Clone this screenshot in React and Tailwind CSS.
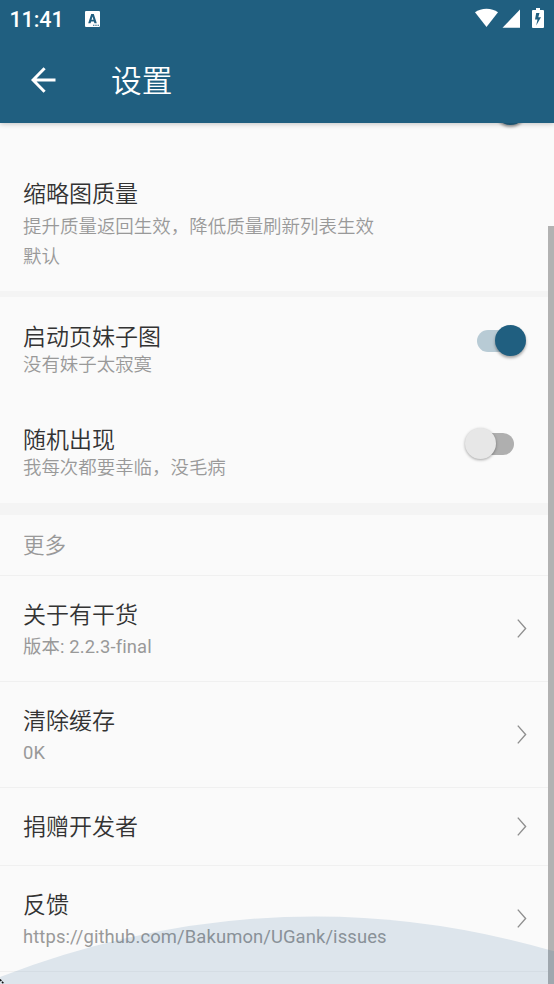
import React from 'react';

const CJK = "font-[Roboto,'Noto_Sans_CJK_SC',sans-serif]";

function StatusBar() {
  return (
    <div className="flex h-[37px] items-center justify-between pl-[9.5px] pr-[10px] text-white">
      <div className="flex items-center">
        <span className="w-[75px] text-[21.5px] font-medium leading-[37px] tracking-[-0.1px] whitespace-nowrap pt-px">11:41</span>
        <svg width="15" height="16" viewBox="0 0 14 16" preserveAspectRatio="none">
          <path fillRule="evenodd" fill="#fff" d="M1 0h12a1 1 0 0 1 1 1v14a1 1 0 0 1-1 1H1a1 1 0 0 1-1-1V1a1 1 0 0 1 1-1zM5.800 3L3 12.200h2.200l.5-1.700h2.600l.5 1.700H11L8.200 3zM7 5.400l.9 3.300H6.100zM7.500 13.800v1h1.300v-1zM9.600 13.800v1h1.300v-1zM11.700 13.800v1H13v-1z" />
        </svg>
      </div>
      <svg width="69" height="20" viewBox="0 0 69 20" fill="#fff" className="relative top-[-0.5px]">
        <path d="M0 4.300C6-.4 17-.4 23 4.300L11.500 19z" />
        <path d="M45 1.500V19.700H27.500z" />
        <path fillRule="evenodd" d="M61 0h4v2h3a1 1 0 0 1 1 1v16a1 1 0 0 1-1 1H58a1 1 0 0 1-1-1V3a1 1 0 0 1 1-1h3zM64.500 5h-3.300L60 11.500h2.500L61.200 17.500L66 9.300h-2.700z" />
      </svg>
    </div>
  );
}

function Chevron() {
  return (
    <svg width="10" height="19" viewBox="0 0 10 19" fill="none" stroke="#8f8f8f" strokeWidth="1.400" className="relative top-[-0.5px]">
      <path d="M.8 .6L8.600 9.500L.8 18.400" />
    </svg>
  );
}

function Row({ title, sub, className }) {
  return (
    <div className={'flex items-center justify-between border-b border-[#f0f0f0] pl-[23px] pr-[27px] ' + className}>
      <div className={sub ? 'pt-[3px]' : 'pt-[2px]'}>
        <div className="text-[23px] leading-[32px] text-[#333]">{title}</div>
        {sub && <div className="text-[18.4px] font-normal leading-[28px] tracking-[0.11px] text-[#999] pt-px">{sub}</div>}
      </div>
      <Chevron />
    </div>
  );
}

function Toggle({ on }) {
  return on ? (
    <div className="relative h-[31px] w-[49px]">
      <div className="absolute left-0 top-[5px] h-[22px] w-[42px] rounded-full bg-[#b8cbd5]" />
      <div className="absolute right-0 top-0 size-[31px] rounded-full bg-[#205f80] shadow-[0_2px_3px_rgba(0,0,0,0.35)]" />
    </div>
  ) : (
    <div className="relative mr-[12px] h-[31px] w-[49px]">
      <div className="absolute right-0 top-[5px] h-[22px] w-[42px] rounded-full bg-[#afafaf]" />
      <div className="absolute left-0 top-0 size-[31px] rounded-full bg-[#e7e7e7] shadow-[0_1px_3px_rgba(0,0,0,0.35)]" />
    </div>
  );
}

function SwitchRow({ title, sub, on }) {
  return (
    <div className="flex h-[103px] justify-between pl-[23px] pr-[28.400px]">
      <div className="pt-[25px]">
        <div className="text-[23px] leading-[32px] text-[#333]">{title}</div>
        <div className="mt-[-2px] text-[18.45px] leading-[26px] text-[#999]">{sub}</div>
      </div>
      <div className="pt-[28.400px]">
        <Toggle on={on} />
      </div>
    </div>
  );
}

export default function App() {
  return (
    <div className={'relative h-[984px] w-[554px] overflow-hidden bg-[#fafafa] font-[350] ' + CJK} lang="zh-CN">
      <header className="relative z-10 h-[123px] bg-[#205f80] shadow-[0_1px_5px_rgba(0,0,0,0.22)]">
        <StatusBar />
        <div className="flex h-[86px] items-center pl-[31px]">
          <svg width="25" height="26" viewBox="0 0 25 26" fill="none" stroke="#fff" strokeWidth="3">
            <path d="M24.500 13H2.500M13.600 1.200L2 13L13.600 24.800" />
          </svg>
          <h1 className="pl-[55px] pt-[4px] text-[30.700px] font-[350] leading-[44px] text-white">设置</h1>
        </div>
      </header>

      <main>
        <section className="relative h-[168px] pl-[23px] pt-[56px]">
          <div className="absolute left-[495px] top-[-29px] size-[31px] rounded-full bg-[#205f80] shadow-[0_2px_3px_rgba(0,0,0,0.4)]" />
          <div className="text-[23px] leading-[32px] text-[#333]">缩略图质量</div>
          <div className="pt-px text-[18.480px] leading-[30px] text-[#999]">
            提升质量返回生效，降低质量刷新列表生效
            <br />
            默认
          </div>
        </section>
        <div className="h-[6px] bg-[#f4f4f4]" />
        <SwitchRow title="启动页妹子图" sub="没有妹子太寂寞" on />
        <SwitchRow title="随机出现" sub="我每次都要幸临，没毛病" />
        <div className="h-[12px] bg-[#f4f4f4]" />
        <div className="flex h-[61px] items-center border-b border-[#f0f0f0] pl-[23px] pt-[3px] text-[21.500px] text-[#999]">更多</div>
        <Row title="关于有干货" sub="版本: 2.2.3-final" className="h-[106px]" />
        <Row title="清除缓存" sub="0K" className="h-[106px]" />
        <Row title="捐赠开发者" className="h-[78px]" />
        <Row title="反馈" sub="https://github.com/Bakumon/UGank/issues" className="h-[106px]" />
      </main>

      <div className="absolute right-0 top-[226px] h-[758px] w-[6px] bg-[#b2b2b2]" />
      <svg className="absolute bottom-0 left-0" width="554" height="70" viewBox="0 914 554 70">
        <path d="M0 977Q277 870.600 554 951.300V984H0z" fill="#205f8f" fillOpacity="0.13" />
        <path d="M0 979.500L4 984" stroke="#111" strokeWidth="1.500" strokeDasharray="2 1" fill="none" />
      </svg>
    </div>
  );
}
